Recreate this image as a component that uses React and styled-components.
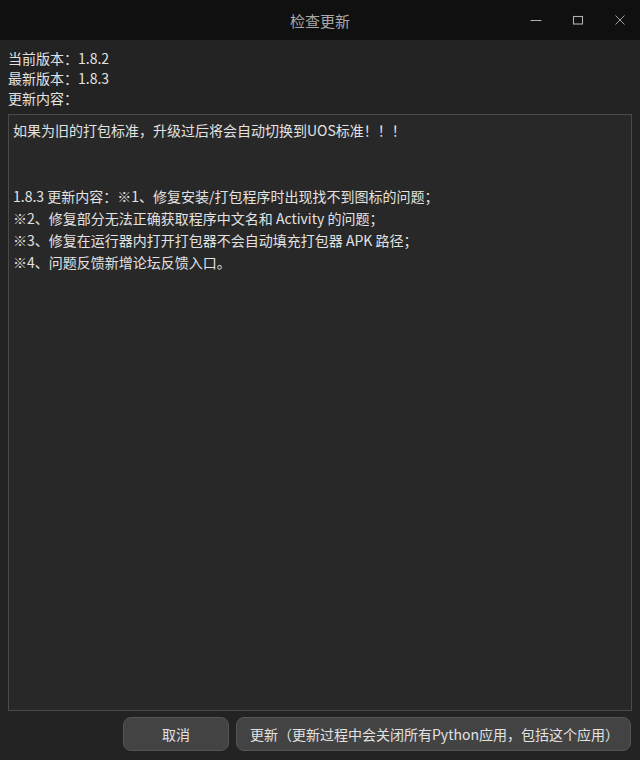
import styled, { createGlobalStyle } from "styled-components";

const Global = createGlobalStyle`
  html, body {
    margin: 0;
    padding: 0;
    background: #232323;
  }
  body {
    font-family: "Noto Sans CJK SC", "Noto Sans", sans-serif;
  }
`;

const Window = styled.div`
  width: 640px;
  height: 760px;
  display: flex;
  flex-direction: column;
  background: #232323;
  color: #e2e2e2;
  font-size: 14px;
  overflow: hidden;
`;

const TitleBar = styled.div`
  height: 40px;
  flex: none;
  background: #101010;
  position: relative;
  display: flex;
  align-items: center;
  justify-content: center;
`;

const Title = styled.div`
  color: #a8a8a8;
  font-size: 15px;
`;

const Controls = styled.div`
  position: absolute;
  right: -1px;
  top: 0;
  height: 40px;
  display: flex;
`;

const Control = styled.div`
  width: 42px;
  height: 40px;
  display: flex;
  align-items: center;
  justify-content: center;
`;

const Body = styled.div`
  flex: 1;
  display: flex;
  flex-direction: column;
  padding: 8px 8px 9px 8px;
  min-height: 0;
`;

const Label = styled.div`
  line-height: 20px;
  height: 20px;
`;

const TextBox = styled.div`
  flex: 1;
  margin-top: 6px;
  border: 1px solid #4a4a4a;
  background: #282828;
  padding: 4px;
  line-height: 22px;
  white-space: pre-wrap;
`;

const Line = styled.div`
  height: 22px;
`;

const ButtonRow = styled.div`
  display: flex;
  justify-content: flex-end;
  gap: 7px;
  margin-top: 6px;
  padding-right: 1px;
`;

const Button = styled.button`
  height: 34px;
  width: ${(p) => p.$width}px;
  padding: 0 ${(p) => (p.$center ? 0 : 13)}px;
  text-align: ${(p) => (p.$center ? "center" : "left")};
  background: #434343;
  border: 1px solid #555555;
  border-radius: 8px;
  color: #e2e2e2;
  font-family: "Noto Sans CJK SC", "Noto Sans", sans-serif;
  font-size: 14px;
  white-space: nowrap;
`;

const lines = [
  "如果为旧的打包标准，升级过后将会自动切换到UOS标准！！！",
  "",
  "",
  "1.8.3 更新内容：※1、修复安装/打包程序时出现找不到图标的问题；",
  "※2、修复部分无法正确获取程序中文名和 Activity 的问题；",
  "※3、修复在运行器内打开打包器不会自动填充打包器 APK 路径；",
  "※4、问题反馈新增论坛反馈入口。",
];

export default function App() {
  return (
    <Window>
      <Global />
      <TitleBar>
        <Title>检查更新</Title>
        <Controls>
          <Control>
            <svg width="12" height="12" viewBox="0 0 12 12">
              <line x1="0.5" y1="6.5" x2="11.5" y2="6.5" stroke="#b0b0b0" strokeWidth="1" />
            </svg>
          </Control>
          <Control>
            <svg width="12" height="12" viewBox="0 0 12 12">
              <rect x="1.5" y="2.5" width="9" height="7.5" fill="none" stroke="#b0b0b0" strokeWidth="1.1" />
            </svg>
          </Control>
          <Control>
            <svg width="12" height="12" viewBox="0 0 12 12">
              <path d="M1.5 1.5 L10.5 10.5 M10.5 1.5 L1.5 10.5" stroke="#a0a0a0" strokeWidth="1" />
            </svg>
          </Control>
        </Controls>
      </TitleBar>
      <Body>
        <Label>当前版本：1.8.2</Label>
        <Label>最新版本：1.8.3</Label>
        <Label>更新内容：</Label>
        <TextBox>
          {lines.map((l, i) => (
            <Line key={i}>{l}</Line>
          ))}
        </TextBox>
        <ButtonRow>
          <Button $width={106} $center>取消</Button>
          <Button $width={395}>更新（更新过程中会关闭所有Python应用，包括这个应用）</Button>
        </ButtonRow>
      </Body>
    </Window>
  );
}
